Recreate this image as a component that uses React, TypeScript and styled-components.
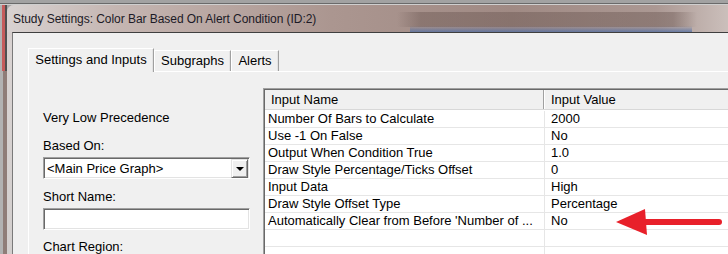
import styled, { createGlobalStyle } from 'styled-components';

const GlobalStyle = createGlobalStyle`
  html, body {
    margin: 0;
    padding: 0;
    width: 728px;
    height: 254px;
    overflow: hidden;
    background: #a4a4a4;
  }

  body {
    font-family: 'Liberation Sans', Arial, sans-serif;
    color: #000;
  }
`;

const Screen = styled.div`
  width: 728px;
  height: 254px;
  overflow: hidden;
  display: flex;
  flex-direction: column;
`;

const BackWindowEdge = styled.div`
  flex: none;
  height: 5px;
  background: linear-gradient(
    to bottom,
    #a2a2a2 0,
    #a2a2a2 3px,
    #6a6a6a 3px,
    #6a6a6a 4px,
    #cfcfcf 4px
  );
`;

const Desk = styled.div`
  flex: 1;
  display: flex;
  min-height: 0;
`;

const LeftEdge = styled.div`
  flex: none;
  width: 7px;
  background:
    linear-gradient(to right, #b2b2b2 0 2px, #c65c5c 2px 5px, #505050 5px 7px) top / 7px 66px no-repeat,
    linear-gradient(to right, #b2b2b2 0 3px, #8f7d78 3px 7px);
`;

const Dialog = styled.div`
  flex: 1;
  display: flex;
  flex-direction: column;
  min-width: 0;
  border-top-left-radius: 7px;
  overflow: hidden;
  background: linear-gradient(to bottom, #cdc4c2, #d9d3d2 40px, #d3cfce);
`;

const TitleBar = styled.div`
  flex: none;
  height: 27px;
  display: flex;
  align-items: center;
  padding-left: 6px;
  font-size: 12px;
  letter-spacing: -0.05px;
  color: #1c1a26;
  white-space: nowrap;
  background:
    linear-gradient(to bottom, rgba(80, 110, 165, 0), rgba(80, 110, 165, 0.75)) 403px 21px / 282px 6px no-repeat,
    linear-gradient(to right, rgba(120, 95, 88, 0), rgba(100, 80, 75, 0.4) 8%, rgba(100, 80, 75, 0.4) 92%, rgba(120, 95, 88, 0)) 390px 7px / 300px 15px no-repeat,
    linear-gradient(to right, #d8d2d1 0, #c5b6b2 15%, #ab9690 45%, #a08a84 70%, #ab9893 90%, #cbbfbb 100%);
`;

const FrameBody = styled.div`
  flex: 1;
  display: flex;
  padding-left: 5px;
  min-height: 0;
`;

const Client = styled.div`
  flex: 1;
  display: flex;
  flex-direction: column;
  background: #f0f0f0;
  border-top: 1px solid #3f3f3f;
  border-left: 1px solid #7a7a7a;
  padding: 15px 0 0 15px;
  min-width: 0;
`;

const TabStrip = styled.div`
  flex: none;
  height: 23px;
  display: flex;
  align-items: flex-end;
`;

const Tab = styled.div<{ $active?: boolean; $width: number }>`
  position: relative;
  box-sizing: border-box;
  flex: none;
  width: ${(p) => p.$width}px;
  height: ${(p) => (p.$active ? '24px' : '21px')};
  margin-bottom: ${(p) => (p.$active ? '-1px' : '0')};
  z-index: ${(p) => (p.$active ? 1 : 0)};
  padding-top: ${(p) => (p.$active ? '3px' : '2px')};
  text-align: center;
  font-size: 13px;
  line-height: 16px;
  white-space: nowrap;
  background: #f0f0f0;
  border-top: 1px solid #ffffff;
  border-left: 1px solid #ffffff;
  border-right: 1px solid #a0a0a0;
  box-shadow: inset -1px 0 0 #e3e3e3;
`;

const TabPanel = styled.div`
  flex: 1;
  display: flex;
  gap: 13px;
  border-top: 1px solid #ffffff;
  border-left: 1px solid #ffffff;
  min-height: 0;
`;

const FormColumn = styled.div`
  flex: none;
  width: 207px;
  display: flex;
  flex-direction: column;
  padding: 38px 0 0 14px;
`;

const FieldLabel = styled.div<{ $gap: number }>`
  margin-top: ${(p) => p.$gap}px;
  font-size: 13px;
  line-height: 15px;
  white-space: nowrap;
`;

const Sunken = styled.div<{ $gap: number }>`
  box-sizing: border-box;
  height: 23px;
  margin-top: ${(p) => p.$gap}px;
  display: flex;
  align-items: center;
  background: #ffffff;
  border-top: 1px solid #a0a0a0;
  border-left: 1px solid #a0a0a0;
  border-right: 1px solid #ffffff;
  border-bottom: 1px solid #ffffff;
  box-shadow: inset 1px 1px 0 #696969, inset -1px -1px 0 #e3e3e3;
`;

const ComboText = styled.span`
  flex: 1;
  padding-left: 3px;
  font-size: 13px;
  line-height: 15px;
  white-space: nowrap;
`;

const DropButton = styled.div`
  box-sizing: border-box;
  width: 17px;
  height: 19px;
  margin-right: 1px;
  display: flex;
  align-items: center;
  justify-content: center;
  background: #f0f0f0;
  border-top: 1px solid #e3e3e3;
  border-left: 1px solid #e3e3e3;
  border-right: 1px solid #696969;
  border-bottom: 1px solid #696969;
  box-shadow: inset 1px 1px 0 #ffffff, inset -1px -1px 0 #a0a0a0;

  &::after {
    content: '';
    margin-top: 1px;
    border-left: 4px solid transparent;
    border-right: 4px solid transparent;
    border-top: 4px solid #000;
  }
`;

const GridWrap = styled.div`
  position: relative;
  flex: 1;
  margin-top: 16px;
  min-width: 0;
  display: flex;
  flex-direction: column;
  background: #ffffff;
  border-top: 1px solid #a0a0a0;
  border-left: 1px solid #a0a0a0;
  box-shadow: inset 1px 1px 0 #696969;
  padding: 1px 0 0 1px;
`;

const HeaderRow = styled.div`
  flex: none;
  display: flex;
  height: 19px;
  background: #f0f0f0;
  border-bottom: 1px solid #d8d8d8;
  box-shadow: 0 1px 0 #ffffff;
  margin-bottom: 1px;
`;

const HeaderCell = styled.div<{ $width?: number }>`
  box-sizing: border-box;
  ${(p) => (p.$width ? `width: ${p.$width}px; flex: none;` : 'flex: 1;')}
  padding-left: ${(p) => (p.$width ? 6 : 7)}px;
  font-size: 13px;
  line-height: 20px;
  white-space: nowrap;
  border-right: ${(p) => (p.$width ? '1px solid #a0a0a0' : 'none')};
  box-shadow: ${(p) => (p.$width ? '1px 0 0 #ffffff' : 'none')};
`;

const Row = styled.div`
  flex: none;
  display: flex;
  height: 17px;
  box-sizing: border-box;
  border-bottom: 1px solid #e6e6e6;
`;

const Cell = styled.div<{ $width?: number }>`
  box-sizing: border-box;
  ${(p) => (p.$width ? `width: ${p.$width}px; flex: none;` : 'flex: 1;')}
  padding-left: ${(p) => (p.$width ? 3 : 6)}px;
  font-size: 13px;
  line-height: 16px;
  white-space: nowrap;
  overflow: hidden;
  border-right: ${(p) => (p.$width ? '1px solid #e6e6e6' : 'none')};
`;

const Arrow = styled.svg`
  position: absolute;
  left: 351px;
  top: 119px;
  width: 108px;
  height: 28px;
`;

const NAME_COL = 280;

const inputs: [string, string][] = [
  ['Number Of Bars to Calculate', '2000'],
  ['Use -1 On False', 'No'],
  ['Output When Condition True', '1.0'],
  ['Draw Style Percentage/Ticks Offset', '0'],
  ['Input Data', 'High'],
  ['Draw Style Offset Type', 'Percentage'],
  ["Automatically Clear from Before 'Number of ...", 'No'],
  ['', ''],
  ['', ''],
];

function App() {
  return (
    <Screen>
      <GlobalStyle />
      <BackWindowEdge />
      <Desk>
        <LeftEdge />
        <Dialog>
          <TitleBar>Study Settings: Color Bar Based On Alert Condition (ID:2)</TitleBar>
          <FrameBody>
            <Client>
              <TabStrip>
                <Tab $active $width={126}>Settings and Inputs</Tab>
                <Tab $width={77}>Subgraphs</Tab>
                <Tab $width={48}>Alerts</Tab>
              </TabStrip>
              <TabPanel>
                <FormColumn>
                  <FieldLabel $gap={0}>Very Low Precedence</FieldLabel>
                  <FieldLabel $gap={13}>Based On:</FieldLabel>
                  <Sunken $gap={4}>
                    <ComboText>&lt;Main Price Graph&gt;</ComboText>
                    <DropButton />
                  </Sunken>
                  <FieldLabel $gap={10}>Short Name:</FieldLabel>
                  <Sunken $gap={4} />
                  <FieldLabel $gap={9}>Chart Region:</FieldLabel>
                </FormColumn>
                <GridWrap>
                  <HeaderRow>
                    <HeaderCell $width={NAME_COL - 1}>Input Name</HeaderCell>
                    <HeaderCell>Input Value</HeaderCell>
                  </HeaderRow>
                  {inputs.map(([name, value], i) => (
                    <Row key={i}>
                      <Cell $width={NAME_COL}>{name}</Cell>
                      <Cell>{value}</Cell>
                    </Row>
                  ))}
                  <Arrow viewBox="0 0 108 28">
                    <rect x="24" y="11" width="83" height="6" rx="3" fill="#e8202a" />
                    <polygon points="1,14 30,1 32,27" fill="#e8202a" />
                  </Arrow>
                </GridWrap>
              </TabPanel>
            </Client>
          </FrameBody>
        </Dialog>
      </Desk>
    </Screen>
  );
}

export default App;
